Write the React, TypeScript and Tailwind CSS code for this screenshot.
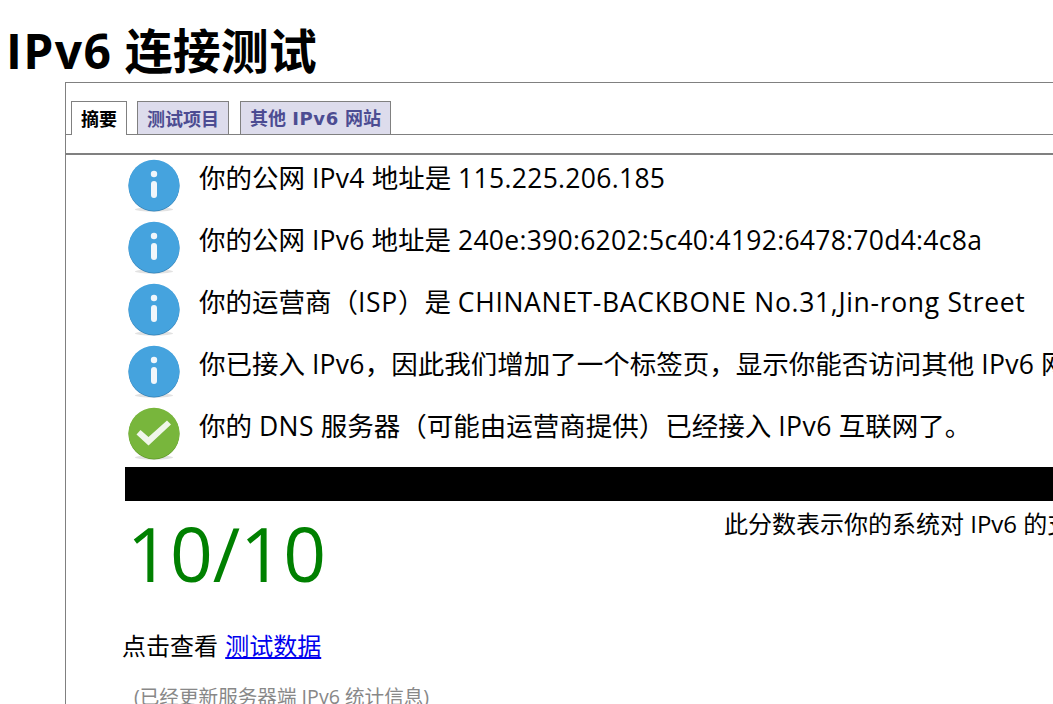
import React from 'react';

const font = { fontFamily: '"Open Sans", "Noto Sans CJK SC", sans-serif' };

const InfoIcon = () => (
  <svg width="54" height="54" viewBox="0 0 54 54" className="shrink-0">
    <ellipse cx="27" cy="50.5" rx="19" ry="2" fill="#e2e2e2" />
    <circle cx="27" cy="27" r="25.5" fill="#3580b4" />
    <circle cx="27" cy="26.3" r="25.5" fill="#45a3de" />
    <circle cx="27" cy="15" r="3.2" fill="#f0f6fb" />
    <rect x="24" y="22" width="6" height="17" rx="3" fill="#f0f6fb" />
  </svg>
);

const CheckIcon = () => (
  <svg width="54" height="54" viewBox="0 0 54 54" className="shrink-0">
    <ellipse cx="27" cy="50.5" rx="19" ry="2" fill="#e2e2e2" />
    <circle cx="27" cy="27" r="25.5" fill="#5f9729" />
    <circle cx="27" cy="26.3" r="25.5" fill="#78b63c" />
    <path d="M9.5 27.5 L13.5 23 L21.5 30 L40 13.5 L44 17.5 L21.5 38.5 Z" fill="#f0f6ea" />
  </svg>
);

// latin runs sit a little wider than the fallback font draws them
const Mixed = ({ text, spacing }: { text: string; spacing: number }) => (
  <>
    {text.split(/([\x21-\x7e][\x20-\x7e]*[\x21-\x7e])/).map((part, i) =>
      i % 2 ? <span key={i} style={{ letterSpacing: spacing }}>{part}</span> : <span key={i}>{part}</span>
    )}
  </>
);

const rows: { text: string; spacing: number; ok?: boolean }[] = [
  { text: '你的公网 IPv4 地址是 115.225.206.185', spacing: 0.3 },
  { text: '你的公网 IPv6 地址是 240e:390:6202:5c40:4192:6478:70d4:4c8a', spacing: 0.27 },
  { text: '你的运营商（ISP）是 CHINANET-BACKBONE No.31,Jin-rong Street', spacing: 0.68 },
  { text: '你已接入 IPv6，因此我们增加了一个标签页，显示你能否访问其他 IPv6 网站', spacing: 0.3 },
  { text: '你的 DNS 服务器（可能由运营商提供）已经接入 IPv6 互联网了。', spacing: 0.45, ok: true },
];

export default function App() {
  return (
    <div className="w-[1053px] h-[704px] overflow-hidden bg-white text-black" style={font}>
      <h1 className="pl-[6px] pt-[21px] h-[82px] text-[48px] leading-[60px] font-bold whitespace-nowrap">
        <span className="tracking-[1.4px]">IPv6</span> 连接测试
      </h1>

      <div className="ml-[65px] w-[1100px] h-[700px] border border-[#808080] overflow-hidden">
        <div className="flex items-end gap-[10px] pl-[5px] pt-[18px] h-[52px] border-b border-[#808080]">
          <div className="h-[34px] mb-[-1px] px-[9px] bg-white border border-b-0 border-[#808080] text-[18px] leading-[34px] font-bold whitespace-nowrap">摘要</div>
          <div className="h-[33px] px-[9px] bg-[#dddcec] border border-b-0 border-[#808080] text-[#4c4c92] text-[18px] leading-[34px] font-bold whitespace-nowrap">测试项目</div>
          <div className="h-[33px] ml-px px-[9px] bg-[#dddcec] border border-b-0 border-[#808080] text-[#4c4c92] text-[18px] leading-[34px] font-bold whitespace-nowrap" style={{ fontFamily: '"DejaVu Sans", "Noto Sans CJK SC", sans-serif' }}>其他 <span className="tracking-[0.6px]">IPv6</span> 网站</div>
        </div>
        <div className="h-[20px] border-b-2 border-[#808080]" />

        <div className="pl-[59px]">
          <div className="flex flex-col gap-[8px] pt-[4px] pl-[2px]">
            {rows.map(r => (
              <div key={r.text} className="flex items-start gap-[18px] h-[54px]">
                {r.ok ? <CheckIcon /> : <InfoIcon />}
                <span className="mt-px text-[26.5px] leading-[36px] whitespace-nowrap"><Mixed text={r.text} spacing={r.spacing} /></span>
              </div>
            ))}
          </div>

          <div className="h-[34px] mt-[6px] bg-black" />

          <div className="flex h-[106px]">
            <div className="w-[599px] pl-[2px] text-[75px] leading-[105px] text-[#008000]">10/10</div>
            <div className="text-[24px] leading-[46px] whitespace-nowrap">此分数表示你的系统对 IPv6 的支持程度</div>
          </div>

          <p className="mt-[21px] ml-[-3px] text-[24px] leading-[36px] whitespace-nowrap">
            点击查看 <a href="#" className="ml-px text-[#0000ee] underline">测试数据</a>
          </p>
          <p className="mt-[18px] ml-[9px] text-[19.6px] leading-[30px] text-[#888888] whitespace-nowrap">(已经更新服务器端 IPv6 统计信息)</p>
        </div>
      </div>
    </div>
  );
}
